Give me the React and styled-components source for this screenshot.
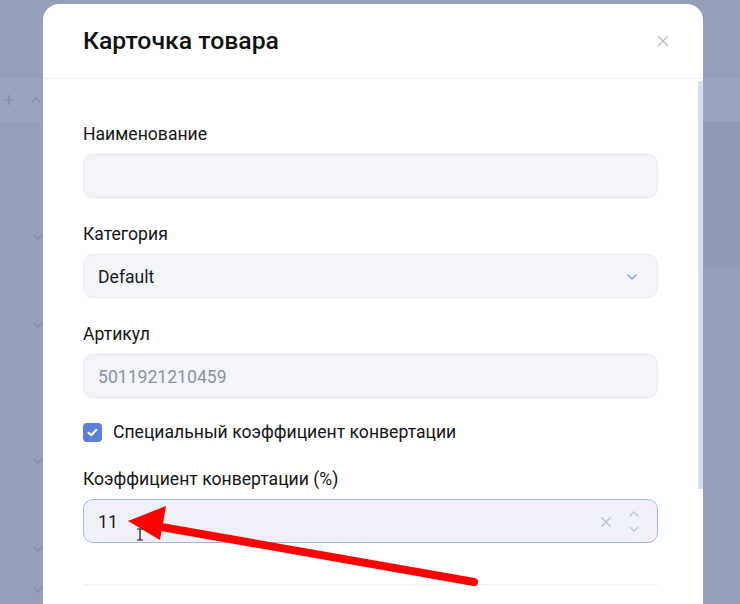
import React from "react";
import styled, { createGlobalStyle } from "styled-components";

const Global = createGlobalStyle`
  html, body { margin: 0; padding: 0; }
  body { font-family: Roboto, "Noto Sans", Arial, sans-serif; background: #959fb8; }
  * { box-sizing: border-box; }
`;

const Page = styled.div`
  position: relative;
  width: 740px;
  height: 604px;
  overflow: hidden;
  background: #959fb8;
`;

const BgList = styled.div`
  display: flex;
  flex-direction: column;
  width: 100%;
`;

const BgRow = styled.div`
  height: ${(p) => p.$h}px;
  background: ${(p) => p.$bg || "transparent"};
  display: flex;
  align-items: center;
  gap: 15px;
  padding: 0 0 0 3px;
  color: #858ea8;
`;

const BgIcon = styled.svg`
  width: 12px;
  height: 12px;
  flex: none;
`;

const Modal = styled.div`
  position: absolute;
  left: 43px;
  top: 4px;
  width: 660px;
  height: 640px;
  background: #ffffff;
  border-radius: 16px;
  display: flex;
  flex-direction: column;
  overflow: hidden;
`;

const Header = styled.div`
  height: 75px;
  flex: none;
  display: flex;
  align-items: center;
  justify-content: space-between;
  padding: 0 33px 0 40px;
  border-bottom: 1px solid #eef0f8;
`;

const Title = styled.h2`
  margin: 0;
  font-size: 24.8px;
  font-weight: 500;
  color: #111111;
  line-height: 30px;
`;

const CloseBtn = styled.button`
  border: none;
  background: none;
  padding: 0;
  width: 14px;
  height: 14px;
  display: flex;
  color: #b9bdcf;
  cursor: pointer;
`;

const BodyWrap = styled.div`
  flex: 1;
  display: flex;
  min-height: 0;
`;

const Body = styled.div`
  flex: 1;
  padding: 45px 40px 0 40px;
  display: flex;
  flex-direction: column;
`;

const Scrollbar = styled.div`
  width: 5px;
  flex: none;
  align-self: flex-start;
  margin-top: 2px;
  height: 408px;
  background: #d8dcec;
  border-radius: 3px 0 0 0;
`;

const Field = styled.div`
  display: flex;
  flex-direction: column;
  gap: 10px;
  margin-bottom: ${(p) => p.$mb ?? 26}px;
`;

const Label = styled.label`
  font-size: 17.6px;
  color: #151515;
  line-height: 20px;
`;

const InputBox = styled.div`
  height: 44px;
  border-radius: 10px;
  background: ${(p) => (p.$focus ? "#f0f1f8" : "#f4f5fa")};
  border: 1px solid ${(p) => (p.$focus ? "#a3b6f2" : "#e9ebf3")};
  display: flex;
  align-items: center;
  padding: 1px ${(p) => (p.$focus ? 17 : 14)}px 0 14px;
  font-size: 17.6px;
  color: ${(p) => (p.$muted ? "#8a92aa" : "#1a1a1a")};
`;

const Value = styled.span`
  flex: 1;
`;

const Icons = styled.div`
  display: flex;
  align-items: center;
  gap: 16px;
`;

const Stepper = styled.div`
  display: flex;
  flex-direction: column;
  gap: 7px;
`;

const CheckRow = styled.div`
  display: flex;
  align-items: center;
  gap: 11px;
  margin: -2px 0 27px;
`;

const Checkbox = styled.span`
  width: 19px;
  height: 19px;
  flex: none;
  border-radius: 4px;
  background: #5b7fdf;
  display: flex;
  align-items: center;
  justify-content: center;
`;

const CheckText = styled.span`
  font-size: 17.6px;
  color: #151515;
  line-height: 20px;
`;

const Divider = styled.div`
  height: 1px;
  background: #eef0f6;
  margin-top: ${(p) => p.$mt}px;
`;

const Annot = styled.svg`
  position: absolute;
  left: 0;
  top: 0;
  width: 740px;
  height: 604px;
  pointer-events: none;
`;

const ChevCol = styled.div`
  position: absolute;
  left: 32px;
  top: 0;
  width: 12px;
  height: 604px;
  color: #868fa9;
  display: flex;
  flex-direction: column;
`;

const ChevSlot = styled.div`
  height: ${(p) => p.$h}px;
  display: flex;
  align-items: flex-end;
`;

const Chevron = ({ up }) => (
  <BgIcon viewBox="0 0 12 12">
    <path
      d={up ? "M2 8 L6 4 L10 8" : "M2 4 L6 8 L10 4"}
      fill="none"
      stroke="currentColor"
      strokeWidth="1.4"
      strokeLinecap="round"
      strokeLinejoin="round"
    />
  </BgIcon>
);

const Plus = () => (
  <BgIcon viewBox="0 0 12 12">
    <path d="M6 1 V11 M1 6 H11" stroke="currentColor" strokeWidth="1.2" />
  </BgIcon>
);

function BgChevrons() {
  const gaps = [243, 88, 136, 88, 41];
  return (
    <ChevCol>
      {gaps.map((g, i) => (
        <ChevSlot key={i} $h={g}>
          <Chevron />
        </ChevSlot>
      ))}
    </ChevCol>
  );
}

export default function App() {
  return (
    <>
      <Global />
      <Page>
        <BgList>
          <BgRow $h={78} />
          <BgRow $h={44} $bg="#9aa4bc">
            <Plus />
            <Chevron up />
          </BgRow>
          <BgRow $h={143} $bg="linear-gradient(90deg, #959fb8 0 700px, #909ab4 700px)" />
        </BgList>
        <BgChevrons />
        <Modal>
          <Header>
            <Title>Карточка товара</Title>
            <CloseBtn aria-label="close">
              <svg width="14" height="14" viewBox="0 0 14 14">
                <path d="M2 2 L12 12 M12 2 L2 12" stroke="currentColor" strokeWidth="1.3" />
              </svg>
            </CloseBtn>
          </Header>
          <BodyWrap>
            <Body>
              <Field>
                <Label>Наименование</Label>
                <InputBox />
              </Field>
              <Field>
                <Label>Категория</Label>
                <InputBox>
                  <Value>Default</Value>
                  <svg width="12" height="12" viewBox="0 0 12 12" style={{ marginRight: 5 }}>
                    <path d="M2 4 L6 8 L10 4" fill="none" stroke="#8ea5ef" strokeWidth="1.5" strokeLinecap="round" strokeLinejoin="round" />
                  </svg>
                </InputBox>
              </Field>
              <Field>
                <Label>Артикул</Label>
                <InputBox $muted>
                  <Value>5011921210459</Value>
                </InputBox>
              </Field>
              <CheckRow>
                <Checkbox>
                  <svg width="13" height="13" viewBox="0 0 13 13">
                    <path d="M2.5 6.8 L5.2 9.3 L10.5 3.8" fill="none" stroke="#fff" strokeWidth="2" strokeLinecap="round" strokeLinejoin="round" />
                  </svg>
                </Checkbox>
                <CheckText>Специальный коэффициент конвертации</CheckText>
              </CheckRow>
              <Field $mb={0}>
                <Label>Коэффициент конвертации (%)</Label>
                <InputBox $focus>
                  <Value>11</Value>
                  <Icons>
                    <svg width="12" height="12" viewBox="0 0 12 12">
                      <path d="M1.5 1.5 L10.5 10.5 M10.5 1.5 L1.5 10.5" stroke="#bcc1d2" strokeWidth="1.4" />
                    </svg>
                    <Stepper>
                      <svg width="12" height="8" viewBox="0 0 12 8">
                        <path d="M2 6 L6 2 L10 6" fill="none" stroke="#c3c7d6" strokeWidth="1.3" strokeLinecap="round" />
                      </svg>
                      <svg width="12" height="8" viewBox="0 0 12 8">
                        <path d="M2 2 L6 6 L10 2" fill="none" stroke="#c3c7d6" strokeWidth="1.3" strokeLinecap="round" />
                      </svg>
                    </Stepper>
                  </Icons>
                </InputBox>
              </Field>
              <Divider $mt={41} />
            </Body>
            <Scrollbar />
          </BodyWrap>
        </Modal>
        <Annot viewBox="0 0 740 604">
          <line x1="474" y1="582" x2="150" y2="525" stroke="#ff0000" strokeWidth="8" strokeLinecap="round" />
          <polygon points="128,521 166,506 160,540" fill="#ff0000" />
          <path d="M137 529 H143 M140 529 V540 M137 540 H143" stroke="#111" strokeWidth="1.2" fill="none" />
        </Annot>
      </Page>
    </>
  );
}
